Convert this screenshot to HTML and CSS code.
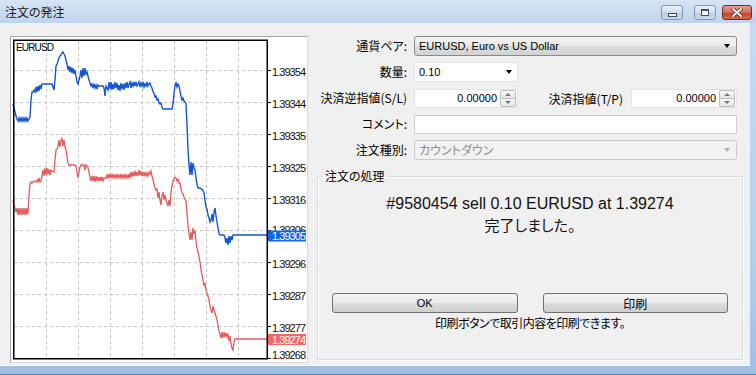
FILE: index.html
```html
<!DOCTYPE html>
<html lang="ja">

<head>
    <meta charset="UTF-8" />
    <title>注文の発注</title>
    <link rel="stylesheet" href="styles.css">
</head>

<body>
    <div class="window">
        <div class="titlebar">
            <span class="title">注文の発注</span>
            <div class="caption">
                <span class="cap-btn cap-min"><i></i></span>
                <span class="cap-btn cap-max"><i></i></span>
                <span class="cap-btn cap-close">
                    <svg width="12" height="9" viewBox="0 0 12 9"><path d="M2 1 L10 8 M10 1 L2 8" stroke="#5a1d14" stroke-width="3.4" stroke-linecap="round"/><path d="M2 1 L10 8 M10 1 L2 8" stroke="#fff" stroke-width="2" stroke-linecap="round"/></svg>
                </span>
            </div>
        </div>

        <div class="client">
            <!-- チャート -->
            <div class="chart">
                <svg width="298" height="327" viewBox="10 36 298 327">
                    <g class="grid">
                        <path d="M14 70.5H266M14 102.5H266M14 134.5H266M14 166.5H266M14 198.5H266M14 230.5H266M14 262.5H266M14 294.5H266M14 326.5H266"/>
                        <path d="M46.5 41V358M78.5 41V358M110.5 41V358M142.5 41V358M174.5 41V358M206.5 41V358M238.5 41V358"/>
                    </g>
                    <path class="ticks" d="M267 70.5H271M267 102.5H271M267 134.5H271M267 166.5H271M267 198.5H271M267 230.5H271M267 262.5H271M267 294.5H271M267 326.5H271M267 358.5H271"/>
                    <polyline class="bid" points="13,200 14,205 15,208 16,212 17,208 18,215 19,208 20,215 21,208 22,215 23,208 24,215 25,208 26,215 27,208 28,214 29,195 30,184 31,182 32,183 34,181 36,182 37,180 38,182 39,178 40,182 41,180 42,176 43,170 44,176 45,168 46,175 47,168 48,174 49,169 50,175 51,170 52,171 54,172 55,160 56,150 57,149 58,146 59,140 60,147 61,141 62,138 63,146 64,140 65,147 66,150 67,157 68,163 69,165 75,165 76,166 77,172 78,178 79,172 80,167 81,165 84,165 85,170 86,165 87,166 88,168 89,172 90,177 91,181 92,176 93,181 94,176 95,182 96,176 97,181 98,177 99,181 100,177 101,181 102,177 103,181 104,178 106,178 107,175 108,178 109,174 110,178 111,174 112,178 113,174 114,178 115,175 116,178 117,174 118,178 119,175 120,178 121,174 122,178 123,175 124,178 125,174 126,178 127,175 128,178 129,174 130,178 131,172 132,177 133,172 134,176 135,171 136,176 137,172 138,176 139,170 140,175 141,171 142,176 143,172 144,176 145,172 146,176 147,173 148,176 149,172 150,174 151,171 152,176 153,180 154,184 155,188 156,190 157,189 158,198 159,192 160,200 161,205 162,196 163,192 164,200 165,195 166,200 167,203 168,206 169,200 170,206 171,192 172,186 173,181 174,179 175,177 176,178 177,181 178,179 179,183 180,183 181,189 182,193 183,194 184,197 185,199 186,201 187,214 188,226 189,234 190,240 191,232 192,240 193,228 194,233 195,232 196,241 197,248 198,252 199,257 200,262 201,270 202,275 203,280 204,286 205,283 206,290 207,293 208,296 209,300 210,306 211,310 212,313 213,306 214,310 215,313 216,316 217,320 218,326 219,331 220,334 221,338 222,332 223,338 224,332 225,337 226,333 227,337 228,334 229,341 230,336 231,344 232,348 233,350 234,342 235,339 268,339"/>
                    <polyline class="ask" points="13,104 14,108 15,112 16,116 17,119 18,121 19,118 20,121 21,118 22,121 23,118 24,121 25,118 26,121 27,118 28,121 29,119 30,117 31,100 32,92 33,92 34,90 35,92 36,87 37,92 38,86 39,91 40,85 41,89 42,84 44,84 52,84 53,87 54,90 55,80 56,66 57,64 58,61 59,58 60,56 61,55 62,53 63,52 64,54 65,56 66,60 67,64 68,70 69,66 70,72 71,67 72,73 73,68 74,74 75,70 76,76 77,82 78,84 79,80 80,76 81,70 82,78 83,68 84,76 85,68 86,74 87,72 88,76 89,80 90,83 91,86 92,84 93,88 94,84 95,88 96,85 97,89 98,85 99,86 101,86 103,86 104,88 105,96 106,86 107,88 108,90 109,82 110,89 111,82 112,90 113,84 114,89 115,82 116,88 117,83 118,90 119,85 120,91 121,83 122,89 123,84 124,90 125,83 126,88 127,82 128,88 129,84 130,82 131,88 132,83 133,86 134,82 135,86 136,82 137,86 138,84 139,82 140,87 141,83 142,86 143,82 144,87 145,84 146,86 147,82 148,86 149,84 150,83 151,86 152,88 153,92 154,93 155,97 156,96 157,100 158,99 159,103 160,104 161,103 162,107 163,109 164,109 172,109 173,104 174,94 175,86 176,83 177,87 178,84 179,86 180,91 181,96 182,100 183,98 184,101 185,102 186,104 187,125 188,150 189,165 190,175 191,162 192,175 193,163 194,168 195,170 196,178 197,184 198,188 200,188 201,189 203,190 204,193 205,200 206,207 207,209 208,215 209,218 210,222 211,220 212,214 213,222 214,212 215,208 216,216 217,222 218,228 219,234 220,235 224,235 225,238 226,243 227,238 228,245 229,236 230,243 231,236 232,240 233,235 268,235"/>
                    <rect class="frame" x="13.75" y="40.25" width="253.5" height="318.5"/>
                    <text class="symbol" x="16" y="51" textLength="38">EURUSD</text>
                    <g class="prices">
                        <text x="272" y="76" textLength="34">1.39354</text>
                        <text x="272" y="108" textLength="34">1.39344</text>
                        <text x="272" y="140" textLength="34">1.39335</text>
                        <text x="272" y="172" textLength="34">1.39325</text>
                        <text x="272" y="204" textLength="34">1.39316</text>
                        <text x="272" y="234" textLength="34">1.39306</text>
                        <text x="272" y="268" textLength="34">1.39296</text>
                        <text x="272" y="300" textLength="34">1.39287</text>
                        <text x="272" y="332" textLength="34">1.39277</text>
                        <text x="272" y="359" textLength="34">1.39268</text>
                    </g>
                    <rect class="tag-ask" x="268" y="230.5" width="38" height="11"/>
                    <text class="tag-text" x="272" y="240" textLength="34">1.39305</text>
                    <rect class="tag-bid" x="268" y="334" width="38" height="11"/>
                    <text class="tag-text" x="272" y="343.5" textLength="34">1.39274</text>
                </svg>
            </div>

            <!-- 注文フォーム -->
            <div class="order">
                <div class="form">
                    <label>通貨ペア:</label>
                    <div class="combo combo-button"><span class="latin">EURUSD, Euro vs US Dollar</span><span class="arrow"></span></div>

                    <label>数量:</label>
                    <div class="combo combo-edit qty"><span class="latin">0.10</span><span class="arrow"></span></div>

                    <label>決済逆指値(S/L)</label>
                    <div class="stops">
                        <div class="spin">
                            <span class="val latin">0.00000</span>
                            <span class="spin-btns"><span class="up"></span><span class="down"></span></span>
                        </div>
                        <label class="tp-label">決済指値(T/P)</label>
                        <div class="spin spin-tp">
                            <span class="val latin">0.00000</span>
                            <span class="spin-btns"><span class="up"></span><span class="down"></span></span>
                        </div>
                    </div>

                    <label>コメント:</label>
                    <div class="edit"></div>

                    <label>注文種別:</label>
                    <div class="combo combo-disabled">カウントダウン<span class="arrow"></span></div>
                </div>

                <fieldset class="group">
                    <legend>注文の処理</legend>
                    <div class="group-body">
                        <p class="result">#9580454 sell 0.10 EURUSD at 1.39274<br><span class="done">完了しました。</span></p>
                        <div class="buttons">
                            <button class="latin">OK</button>
                            <button>印刷</button>
                        </div>
                        <p class="hint">印刷ボタンで取引内容を印刷できます。</p>
                    </div>
                </fieldset>
            </div>
        </div>
    </div>
</body>

</html>
```

FILE: styles.css
```css
* {
    box-sizing: border-box;
}

body {
    margin: 0;
    font-family: "Noto Sans CJK JP", sans-serif;
    font-size: 12px;
    font-feature-settings: "palt";
    color: #000;
}

.latin {
    font-family: "Liberation Sans", Arial, sans-serif;
    font-size: 11px;
}

.window {
    width: 756px;
    height: 375px;
    display: flex;
    flex-direction: column;
    background: linear-gradient(#c9dcf1, #b6cfe9 70%, #9dbfe2);
    border-bottom: 1px solid #5a86b4;
}

/* タイトルバー */
.titlebar {
    height: 23px;
    display: flex;
    align-items: flex-start;
    justify-content: space-between;
    padding: 0 4px 0 5px;
    background: linear-gradient(#d6e4f5, #bfd4ec);
}

.title {
    line-height: 23px;
    font-size: 12px;
    color: #1a1a1a;
}

.caption {
    display: flex;
    margin-top: 5px;
}

.cap-btn {
    height: 15px;
    display: flex;
    align-items: center;
    justify-content: center;
    border: 1px solid #7d98b8;
    border-radius: 3px;
    background: linear-gradient(#e9f0f8, #cfdeef 50%, #b8cde6 51%, #c9daee);
}

.cap-min {
    width: 22px;
    margin-right: 11px;
}

.cap-max {
    width: 22px;
    margin-right: 6px;
}

.cap-close {
    width: 30px;
    border-color: #7a2a20;
    background: linear-gradient(#e6a293, #d46a56 50%, #c43c25 51%, #d66a50);
}

.cap-min i {
    width: 9px;
    height: 4px;
    margin-top: 5px;
    border: 1px solid #3b4f6a;
    background: #fff;
}

.cap-max i {
    width: 8px;
    height: 7px;
    border: 1px solid #3b4f6a;
    border-top-width: 2px;
    background: #fff;
}

/* クライアント領域 */
.client {
    height: 343px;
    margin-right: 6px;
    display: flex;
    gap: 9px;
    padding: 13px 0 0 10px;
    background: #f0f0f0;
    border-bottom: 1px solid #fff;
}

.chart {
    width: 298px;
    height: 327px;
    border: 1px solid #a8a8a8;
    border-right-color: #dadada;
    border-bottom-color: #dadada;
    background: #fff;
    overflow: hidden;
}

.chart svg {
    display: block;
    margin: -1px 0 0 -1px;
}

.grid {
    stroke: #c4c4c4;
    stroke-width: 1;
    stroke-dasharray: 3 3;
    fill: none;
}

.ticks {
    stroke: #000;
    stroke-width: 1;
}

.frame {
    fill: none;
    stroke: #000;
    stroke-width: 1.5;
}

.ask {
    fill: none;
    stroke: #1656cc;
    stroke-width: 1.4;
}

.bid {
    fill: none;
    stroke: #e25c5c;
    stroke-width: 1.3;
}

.symbol {
    font-family: "Liberation Sans", Arial, sans-serif;
    font-size: 10px;
}

.prices text,
.tag-text {
    font-family: "Liberation Sans", Arial, sans-serif;
    font-size: 11px;
    fill: #111;
}

.tag-ask {
    fill: #1566e6;
}

.tag-bid {
    fill: #f06868;
}

.tag-text {
    fill: #fff;
}

/* 注文フォーム */
.order {
    width: 426px;
    display: flex;
    flex-direction: column;
}

.form {
    display: grid;
    grid-template-columns: 90px 323px;
    grid-auto-rows: 20px;
    column-gap: 7px;
    row-gap: 6px;
}

.form > label {
    justify-self: end;
    align-self: center;
    line-height: 16px;
    white-space: nowrap;
}

.combo {
    display: flex;
    align-items: center;
    justify-content: space-between;
    padding: 0 4px 0 4px;
    line-height: 16px;
}

.combo-button {
    border: 1px solid #8a8a8a;
    border-radius: 3px;
    background: linear-gradient(#f3f3f3, #ebebeb 50%, #dddddd 51%, #d3d3d3);
}

.combo-button .arrow {
    margin-right: 2px;
}

.combo-edit {
    width: 104px;
    background: #fff;
    border: 1px solid #e3e4ea;
    padding-right: 5px;
}

.combo-disabled {
    border: 1px solid #c9c9c9;
    border-radius: 3px;
    background: #f2f2f2;
    color: #8f8f8f;
}

.arrow {
    width: 0;
    height: 0;
    border-left: 3.5px solid transparent;
    border-right: 3.5px solid transparent;
    border-top: 4px solid #000;
}

.combo-disabled .arrow {
    margin-right: 2px;
    border-top-color: #b4b4b4;
}

.stops {
    display: flex;
    align-items: center;
}

.tp-label {
    margin-left: auto;
    margin-right: 8px;
    white-space: nowrap;
}

.spin {
    width: 104px;
    height: 19px;
    display: flex;
    align-items: center;
    justify-content: flex-end;
    background: #fff;
    border: 1px solid #e3e4ea;
    padding-right: 1px;
}

.spin-tp {
    width: 106px;
}

.spin .val {
    padding-right: 3px;
    line-height: 16px;
}

.spin-btns {
    width: 16px;
    height: 17px;
    display: flex;
    flex-direction: column;
}

.spin-btns span {
    flex: 1;
    display: flex;
    align-items: center;
    justify-content: center;
    border: 1px solid #bdbdbd;
    background: linear-gradient(#f8f8f8, #e6e6e6);
}

.spin-btns .up {
    border-radius: 2px 2px 0 0;
}

.spin-btns .down {
    border-top: none;
    border-radius: 0 0 2px 2px;
}

.spin-btns .up::after,
.spin-btns .down::after {
    content: "";
    border-left: 3px solid transparent;
    border-right: 3px solid transparent;
}

.spin-btns .up::after {
    border-bottom: 3px solid #6a7a8c;
}

.spin-btns .down::after {
    border-top: 3px solid #6a7a8c;
}

.edit {
    height: 19px;
    align-self: center;
    background: #fff;
    border: 1px solid #cdcdcd;
}

/* 注文の処理 */
.group {
    margin: 9px 0 0 0;
    padding: 0;
    height: 191px;
    border: 1px solid #d5dadf;
    box-shadow: inset 1px 1px #fff, 1px 1px #fff;
}

.group legend {
    margin-left: 5px;
    padding: 0 2px;
    line-height: 14px;
}

.group-body {
    display: flex;
    flex-direction: column;
    align-items: center;
    padding: 10px 14px 0;
}

.result {
    margin: 0;
    text-align: center;
    font-family: "Liberation Sans", Arial, sans-serif;
    font-size: 16px;
    line-height: 21px;
    color: #111;
}

.done {
    font-family: "Noto Sans CJK JP", sans-serif;
    font-size: 15px;
}

.buttons {
    align-self: stretch;
    display: flex;
    gap: 25px;
    margin-top: 57px;
}

.buttons button {
    flex: 1;
    height: 20px;
    padding: 0;
    font-family: "Noto Sans CJK JP", sans-serif;
    font-size: 12px;
    font-feature-settings: "palt";
    color: #000;
    border: 1px solid #707070;
    border-radius: 3px;
    background: linear-gradient(#f2f2f2, #ebebeb 50%, #dddddd 51%, #cfcfcf);
}

.buttons button.latin {
    font-family: "Liberation Sans", Arial, sans-serif;
    font-size: 11px;
}

.hint {
    margin: 3px 0 0;
    line-height: 14px;
    letter-spacing: -0.5px;
}
```
